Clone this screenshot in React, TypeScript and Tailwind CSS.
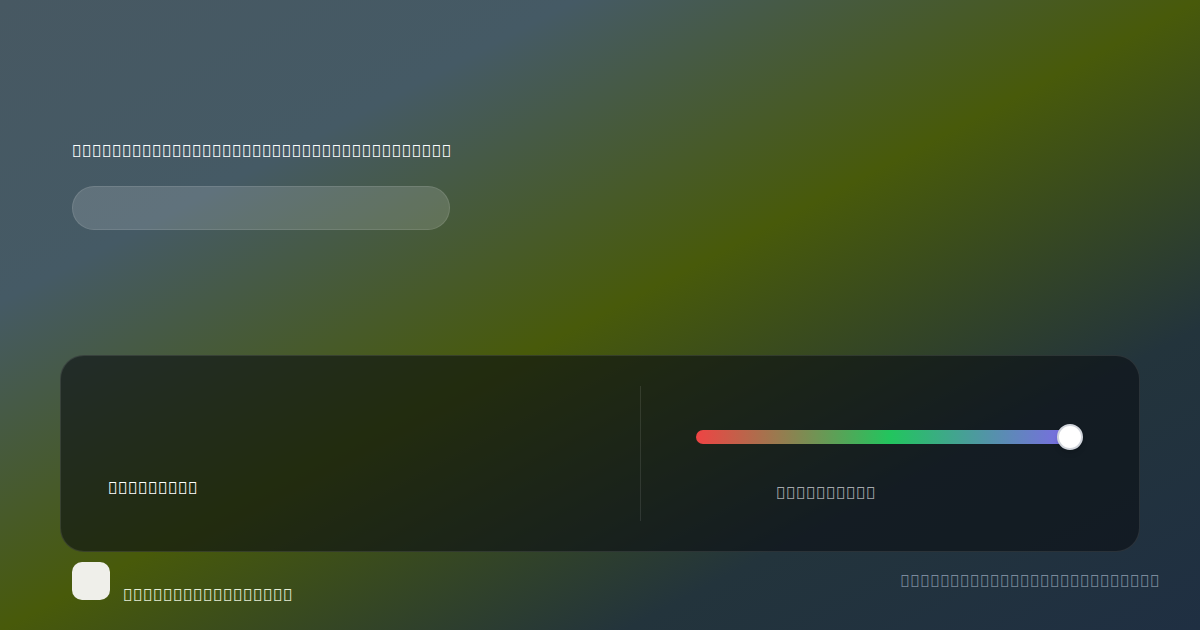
import React from 'react';

const HUES = 'linear-gradient(to right, #ef4444 0%, #22c55e 52%, #7c6ae6 100%)';

// placeholder copy: one private-use code point per character
const label = (n: number, from: number) =>
  Array.from({ length: n }, (_, i) => String.fromCodePoint(from + i)).join('');

function HueSlider({ value }: { value: number }) {
  return (
    <div className="relative h-[26px] w-full">
      <div
        className="absolute left-0 right-[13px] top-1/2 h-[14px] -translate-y-1/2 rounded-full"
        style={{ backgroundImage: HUES }}
      />
      <div
        className="absolute top-0 h-[26px] w-[26px] -translate-x-1/2 rounded-full border-2 border-gray-300 bg-white shadow-md"
        style={{ left: `calc(${value}% - 13px)` }}
      />
    </div>
  );
}

export default function App() {
  return (
    <div className="relative flex h-[630px] w-[1200px] flex-col overflow-hidden bg-[linear-gradient(to_bottom_right,#475862_0%,#455a65_24%,#485a0a_50%,#23343c_76%,#1f2f42_100%)] font-['Noto_Sans',sans-serif] text-[16.67px]">
      <div className="px-[72px] pt-[141px]">
        <p className="leading-5 text-white">{label(38, 0xf0000)}</p>
        <div className="mt-[25px] h-[44px] w-[378px] rounded-full border border-white/10 bg-white/15" />
      </div>

      <div className="mx-[60px] mt-[125px] flex h-[197px] rounded-[24px] border border-white/10 bg-[#0a0d12]/60 py-[30px]">
        <div className="w-[579px] pl-[47px] pt-[92px]">
          <p className="leading-5 text-white">{label(9, 0xf0030)}</p>
        </div>
        <div className="w-px bg-white/10" />
        <div className="flex-1 pl-[55px] pr-[56px] pt-[38px]">
          <HueSlider value={100} />
          <p className="ml-20 mt-[33px] leading-5 text-[#a5a9ad]">{label(10, 0xf0040)}</p>
        </div>
      </div>

      <div className="flex items-start justify-between pl-[72px] pr-10 pt-[10px]">
        <div className="flex items-start gap-[13px]">
          <div className="h-[38px] w-[38px] rounded-[10px] bg-[#efefea]" />
          <p className="mt-[23px] leading-5 text-[#e4ecd6]">{label(17, 0xf0050)}</p>
        </div>
        <p className="mt-[9px] leading-5 text-[#7b8b9c]">{label(26, 0xf0070)}</p>
      </div>
    </div>
  );
}
